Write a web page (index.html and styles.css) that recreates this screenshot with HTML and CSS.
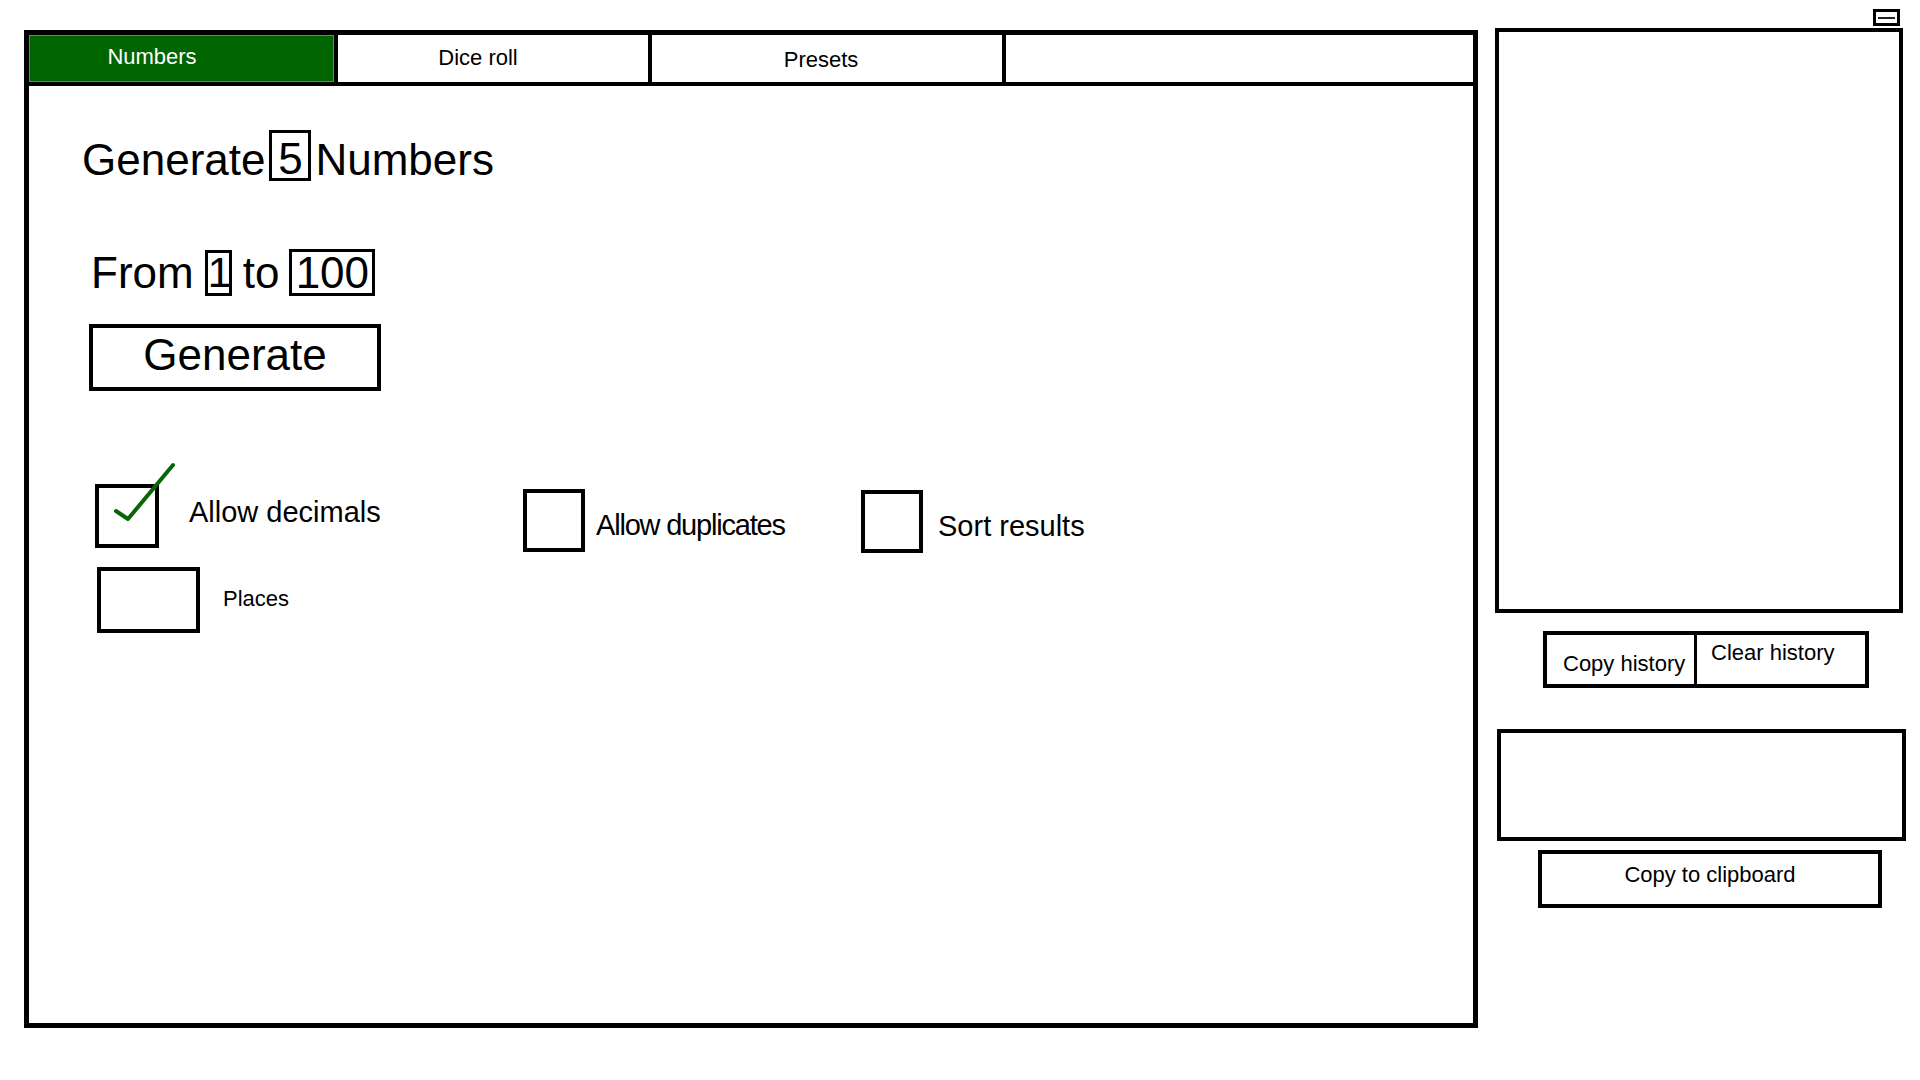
FILE: index.html
```html
<!DOCTYPE html>
<html lang="en">
<head>
  <meta charset="UTF-8">
  <meta name="viewport" content="width=device-width, initial-scale=1.0">
  <title>Random Number Generator</title>
  <link rel="stylesheet" href="styles.css">
</head>
<body>

  <div class="page">

    <main class="panel">
      <nav class="tabs">
        <div class="tab tab-numbers active">Numbers</div>
        <div class="tab tab-dice">Dice roll</div>
        <div class="tab tab-presets">Presets</div>
        <div class="tab tab-blank"></div>
      </nav>

      <section class="generator">
        <div class="heading">
          <span class="word">Generate</span>
          <span class="num-box count-box">5</span>
          <span class="word">Numbers</span>
        </div>

        <div class="range">
          <span>From</span>
          <span class="num-box from-box">1</span>
          <span>to</span>
          <span class="num-box to-box">100</span>
        </div>

        <button class="generate-button">Generate</button>

        <div class="options">
          <div class="option-group group-decimals">
            <div class="option">
              <span class="checkbox checked">
                <svg class="checkmark" width="90" height="80" viewBox="0 0 90 80">
                  <polyline points="21,51 33,59 78,5" fill="none" stroke="#0a650a" stroke-width="4" stroke-linecap="round" stroke-linejoin="round"/>
                </svg>
              </span>
              <span class="option-label">Allow decimals</span>
            </div>
            <div class="option places">
              <span class="places-box"></span>
              <span class="places-label">Places</span>
            </div>
          </div>

          <div class="option-group group-duplicates">
            <div class="option">
              <span class="checkbox"></span>
              <span class="option-label narrow">Allow duplicates</span>
            </div>
          </div>

          <div class="option-group group-sort">
            <div class="option">
              <span class="checkbox"></span>
              <span class="option-label">Sort results</span>
            </div>
          </div>
        </div>
      </section>
    </main>

    <aside class="sidebar">
      <div class="window-bar">
        <span class="minimize"></span>
      </div>
      <div class="history"></div>
      <div class="history-buttons">
        <button class="history-button copy-history">Copy history</button>
        <button class="history-button clear-history">Clear history</button>
      </div>
      <div class="output"></div>
      <button class="clipboard-button">Copy to clipboard</button>
    </aside>

  </div>

</body>
</html>
```

FILE: styles.css
```css
body {
  font-family: 'Liberation Sans', Arial, sans-serif;
  margin: 0;
  padding: 0;
  background-color: #fff;
  color: #000;
}

button {
  font-family: inherit;
  background-color: #fff;
  color: #000;
  margin: 0;
  padding: 0;
  cursor: pointer;
}

.page {
  display: flex;
  align-items: flex-start;
  gap: 17px;
  padding-left: 24px;
}

/* main panel */

.panel {
  box-sizing: border-box;
  width: 1454px;
  height: 998px;
  margin-top: 30px;
  border: 5px solid #000;
}

.tabs {
  display: flex;
  height: 47px;
  border-bottom: 4px solid #000;
}

.tab {
  box-sizing: border-box;
  display: flex;
  align-items: center;
  justify-content: center;
  font-size: 22px;
  border-right: 4px solid #000;
}

.tab-numbers {
  width: 309px;
  padding-right: 59px;
  padding-bottom: 4px;
}

.tab-numbers.active {
  background-color: #006400;
  color: white;
  box-shadow: inset 0 0 0 1px #4c9a4c;
}

.tab-dice {
  width: 314px;
  padding-right: 30px;
  padding-bottom: 2px;
}

.tab-presets {
  width: 354px;
  padding-top: 2px;
  padding-right: 12px;
}

.tab-blank {
  flex: 1;
  border-right: none;
}

.generator {
  font-size: 44px;
}

.num-box {
  box-sizing: border-box;
  display: inline-block;
  border: 3px solid #000;
  text-align: center;
}

.heading {
  display: flex;
  align-items: center;
  gap: 4px;
  margin: 44px 0 0 53px;
  height: 51px;
}

.heading .word {
  padding-top: 8px;
}

.count-box {
  width: 42px;
  height: 51px;
  padding-top: 7px;
  line-height: 38px;
}

.range {
  display: flex;
  align-items: center;
  gap: 11px;
  margin: 68px 0 0 62px;
  height: 47px;
}

.from-box {
  width: 27px;
  height: 46px;
  line-height: 40px;
  font-size: 42px;
}

.to-box {
  width: 86px;
  height: 47px;
  line-height: 41px;
  margin-left: -1px;
}

.generate-button {
  box-sizing: border-box;
  display: block;
  width: 292px;
  height: 67px;
  margin: 28px 0 0 60px;
  padding-bottom: 5px;
  font-size: 44px;
  border: 4px solid #000;
}

/* options */

.options {
  display: flex;
  margin: 93px 0 0 66px;
}

.option-group {
  display: flex;
  flex-direction: column;
}

.group-decimals {
  width: 428px;
  gap: 19px;
}

.group-duplicates {
  width: 338px;
  margin-top: 5px;
}

.group-sort {
  margin-top: 6px;
}

.option {
  display: flex;
  align-items: center;
}

.checkbox {
  position: relative;
  box-sizing: border-box;
  width: 64px;
  height: 64px;
  border: 4px solid #000;
}

.group-duplicates .checkbox,
.group-sort .checkbox {
  width: 62px;
  height: 63px;
}

.checkmark {
  position: absolute;
  left: -4px;
  top: -28px;
}

.option-label {
  font-size: 29px;
  margin-left: 30px;
  margin-bottom: 8px;
}

.group-duplicates .option-label {
  margin-left: 11px;
  margin-bottom: 0;
  margin-top: 10px;
}

.group-sort .option-label {
  margin-left: 15px;
  margin-bottom: 0;
  margin-top: 10px;
}

.narrow {
  letter-spacing: -1.2px;
}

.places {
  padding-left: 2px;
}

.places-box {
  box-sizing: border-box;
  width: 103px;
  height: 66px;
  border: 4px solid #000;
}

.places-label {
  font-size: 22px;
  margin-left: 23px;
  margin-bottom: 2px;
}

/* sidebar */

.sidebar {
  display: flex;
  flex-direction: column;
  width: 411px;
  padding-top: 9px;
}

.window-bar {
  display: flex;
  justify-content: flex-end;
  margin-bottom: 2px;
  padding-right: 6px;
}

.minimize {
  box-sizing: border-box;
  display: flex;
  align-items: center;
  justify-content: center;
  width: 27px;
  height: 17px;
  border: 3px solid #000;
}

.minimize::before {
  content: "";
  width: 17px;
  height: 2px;
  background-color: #222;
}

.history {
  box-sizing: border-box;
  width: 408px;
  height: 585px;
  border: 4px solid #000;
}

.history-buttons {
  box-sizing: border-box;
  display: flex;
  width: 326px;
  height: 57px;
  margin: 18px 0 0 48px;
  border: 4px solid #000;
}

.history-button {
  box-sizing: border-box;
  height: 100%;
  border: none;
  font-size: 22px;
  line-height: 25px;
  text-align: left;
}

.copy-history {
  width: 150px;
  padding: 8px 0 0 16px;
  border-right: 3px solid #000;
}

.clear-history {
  flex: 1;
  padding: 0 0 15px 14px;
}

.output {
  box-sizing: border-box;
  width: 409px;
  height: 112px;
  margin: 41px 0 0 2px;
  border: 4px solid #000;
}

.clipboard-button {
  box-sizing: border-box;
  width: 344px;
  height: 58px;
  margin: 9px 0 0 43px;
  padding-bottom: 8px;
  font-size: 22px;
  border: 4px solid #000;
}
```
